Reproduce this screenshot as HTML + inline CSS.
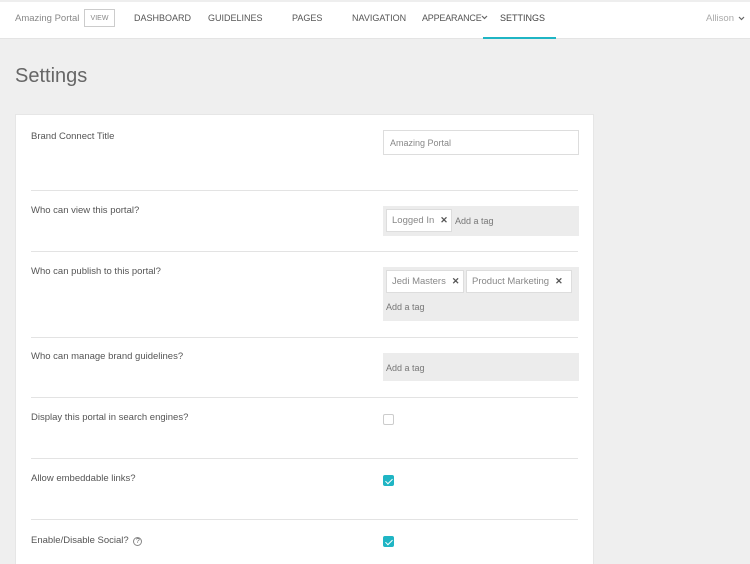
<!DOCTYPE html>
<html><head><style>
*{margin:0;padding:0;box-sizing:border-box}
html,body{width:750px;height:564px;overflow:hidden}
body{background:#efefef;font-family:"Liberation Sans",sans-serif;position:relative;color:#555}
.a{position:absolute}
.nav{left:0;top:2px;width:750px;height:37px;background:#fff;border-bottom:1px solid #e4e4e4}
.ni{top:13px;font-size:9px;color:#555;white-space:nowrap}
.lbl{left:31px;font-size:9.5px;color:#555;white-space:nowrap}
.sep{left:31px;width:547px;height:1px;background:#e3e3e3}
.box{left:383px;width:196px;background:#ececec}
.tag{position:absolute;height:23px;background:#fff;border:1px solid #ddd;font-size:9.5px;color:#888;line-height:21px;padding:0 5px;white-space:nowrap;overflow:hidden}
.tag b{font-size:9px;color:#555;margin-left:6px}
.ph{position:absolute;font-size:9px;color:#777;white-space:nowrap}
.cb{left:383px;width:11px;height:11px;border-radius:2px}
.on{background:#1fb5c4}
.on:after{content:"";position:absolute;left:3.5px;top:1.5px;width:3px;height:6px;border:solid #fff;border-width:0 1.5px 1.5px 0;transform:rotate(45deg)}
</style></head><body>
<div class="a" style="left:0;top:0;width:750px;height:2px;background:#eee"></div>
<div class="a nav"></div>
<div class="a ni" style="left:15px;top:13px;color:#888;font-size:9.5px">Amazing Portal</div>
<div class="a" style="left:84px;top:9px;width:31px;height:18px;border:1px solid #ccc;font-size:7px;color:#888;display:flex;align-items:center;justify-content:center">VIEW</div>
<div class="a ni" style="left:134px">DASHBOARD</div>
<div class="a ni" style="left:208px">GUIDELINES</div>
<div class="a ni" style="left:292px">PAGES</div>
<div class="a ni" style="left:352px">NAVIGATION</div>
<div class="a ni" style="left:422px;letter-spacing:-0.2px">APPEARANCE</div>
<svg class="a" style="left:481px;top:15px" width="7" height="5"><path d="M1 1l2.5 2.5L6 1" stroke="#666" fill="none" stroke-width="1.2"/></svg>
<div class="a ni" style="left:500px;color:#444">SETTINGS</div>
<div class="a" style="left:483px;top:37px;width:73px;height:2px;background:#1fb5c4"></div>
<div class="a ni" style="left:706px;color:#aaa;font-size:9.5px">Allison</div>
<svg class="a" style="left:738px;top:16px" width="7" height="5"><path d="M1 1l2.5 2.5L6 1" stroke="#666" fill="none" stroke-width="1.2"/></svg>
<div class="a" style="left:15px;top:65px;font-size:20px;color:#666">Settings</div>
<div class="a" style="left:15px;top:114px;width:579px;height:460px;background:#fff;border:1px solid #e6e6e6"></div>
<div class="a lbl" style="top:131px">Brand Connect Title</div>
<div class="a" style="left:383px;top:130px;width:196px;height:25px;border:1px solid #ddd;font-size:9px;color:#888;padding:7px 6px">Amazing Portal</div>
<div class="a sep" style="top:190px"></div>
<div class="a lbl" style="top:205px">Who can view this portal?</div>
<div class="a box" style="top:206px;height:30px"><div class="tag" style="left:3px;top:3px;width:66px">Logged In<b>✕</b></div><div class="ph" style="left:72px;top:10px">Add a tag</div></div>
<div class="a sep" style="top:251px"></div>
<div class="a lbl" style="top:266px">Who can publish to this portal?</div>
<div class="a box" style="top:267px;height:54px"><div class="tag" style="left:3px;top:3px;width:78px">Jedi Masters<b>✕</b></div><div class="tag" style="left:83px;top:3px;width:106px">Product Marketing<b>✕</b></div><div class="ph" style="left:3px;top:35px">Add a tag</div></div>
<div class="a sep" style="top:337px"></div>
<div class="a lbl" style="top:351px">Who can manage brand guidelines?</div>
<div class="a box" style="top:353px;height:28px"><div class="ph" style="left:3px;top:10px">Add a tag</div></div>
<div class="a sep" style="top:397px"></div>
<div class="a lbl" style="top:412px">Display this portal in search engines?</div>
<div class="a cb" style="top:414px;border:1px solid #ccc"></div>
<div class="a sep" style="top:458px"></div>
<div class="a lbl" style="top:473px">Allow embeddable links?</div>
<div class="a cb on" style="top:475px"></div>
<div class="a sep" style="top:519px"></div>
<div class="a lbl" style="top:535px">Enable/Disable Social? <span style="display:inline-block;width:9px;height:9px;border:1px solid #888;border-radius:50%;font-size:7px;text-align:center;line-height:8px;margin-left:2px">?</span></div>
<div class="a cb on" style="top:536px"></div>
</body></html>
